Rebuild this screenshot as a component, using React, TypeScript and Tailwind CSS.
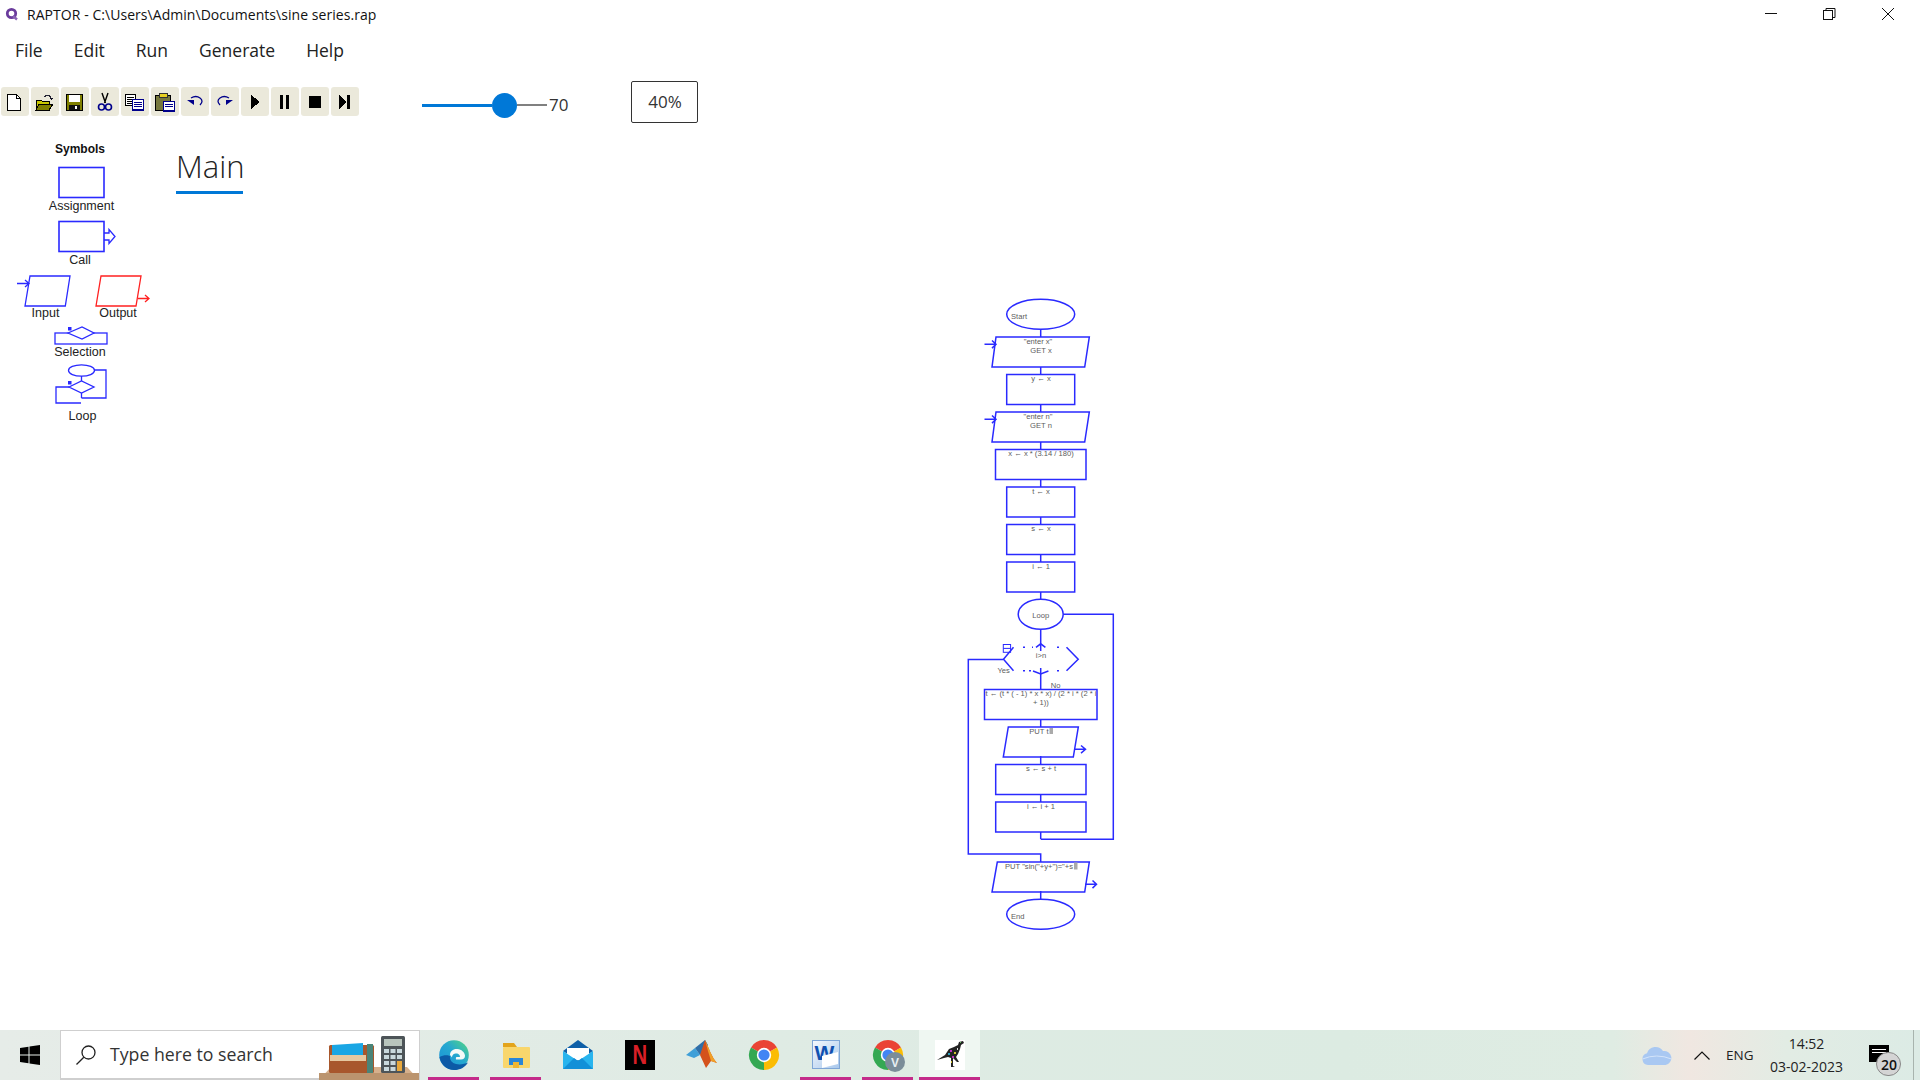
import type { ReactNode } from 'react';

const BLUE = '#2a2aff';
const ui = "font-['Open_Sans','Noto_Sans',sans-serif]";
const arial = "font-['Liberation_Sans',Arial,sans-serif]";

function RaptorLogo() {
  return (
    <svg width="14" height="14" viewBox="0 0 14 14" className="shrink-0">
      <circle cx="6.5" cy="6.5" r="4.2" fill="none" stroke="#6a3b9c" strokeWidth="2.8" />
      <path d="M8 9l4 3.5" stroke="#8a63b4" strokeWidth="2.4" />
    </svg>
  );
}

function WindowControls() {
  return (
    <div className="absolute right-0 top-0 h-[28px] w-[180px]">
      <svg width="180" height="28" viewBox="0 0 180 28" fill="none" stroke="#111" strokeWidth="1">
        <path d="M25 13.5h12" />
        <rect x="83.5" y="10.5" width="9" height="9" />
        <path d="M86 10.5V8.5h9v9h-2" />
        <path d="M142 8l12 12M154 8l-12 12" />
      </svg>
    </div>
  );
}

function TBtn({ children }: { children: ReactNode }) {
  return (
    <div className="flex h-[29px] w-[28px] items-center justify-center rounded-[3px] bg-[#ebe9db]">
      <svg width="20" height="20" viewBox="0 0 20 20" shapeRendering="crispEdges" className="overflow-visible">
        {children}
      </svg>
    </div>
  );
}

function Toolbar() {
  return (
    <div className="flex gap-[2px] pl-px pt-[6px]">
      <TBtn>
        <path d="M2.5 2.500h9l4 4v12h-13z" fill="#fff" stroke="#000" />
        <path d="M11.500 2.500v4h4" fill="none" stroke="#000" />
      </TBtn>
      <TBtn>
        <path d="M1 8h5l1 1h7v9H1z" fill="#c8c800" stroke="#000" />
        <path d="M1 18l3-6h14l-4 6z" fill="#808000" stroke="#000" />
        <path d="M9 5q3-3 6-1l1 3" fill="none" stroke="#223" strokeWidth="1.3" />
        <path d="M14 6h4l-2 2z" fill="#112" />
      </TBtn>
      <TBtn>
        <rect x="1.500" y="2.500" width="16" height="16" fill="#808000" stroke="#000" />
        <rect x="4" y="3" width="11" height="7" fill="#fff" />
        <rect x="4" y="13" width="11" height="5" fill="#111" />
        <rect x="10" y="14" width="2" height="3" fill="#fff" />
      </TBtn>
      <TBtn>
        <path d="M7 1l3.500 10M13 1l-3.500 10" stroke="#000" strokeWidth="1.4" fill="none" shapeRendering="auto" />
        <circle cx="6.500" cy="15" r="3" fill="none" stroke="#00008b" strokeWidth="1.6" shapeRendering="auto" />
        <circle cx="13.500" cy="15" r="3" fill="none" stroke="#00008b" strokeWidth="1.6" shapeRendering="auto" />
      </TBtn>
      <TBtn>
        <rect x="0.500" y="2.500" width="10" height="11" fill="#fff" stroke="#000" />
        <path d="M2 5h7M2 7h7M2 9h7M2 11h7" stroke="#000" />
        <rect x="7.500" y="7.500" width="11" height="11" fill="#fff" stroke="#00008b" />
        <path d="M9 10h8M9 12h8M9 14h8M7 17h12" stroke="#00008b" />
      </TBtn>
      <TBtn>
        <rect x="0.500" y="3.500" width="15" height="15" fill="#77783c" stroke="#000" />
        <rect x="4" y="1" width="8" height="4" fill="#e8d020" stroke="#333" />
        <rect x="8.500" y="9.500" width="11" height="10" fill="#fff" stroke="#00008b" />
        <path d="M10 12h8M10 14h8M8 18h12" stroke="#00008b" />
      </TBtn>
      <TBtn>
        <path d="M6 6q5-3 9 0t0 7" fill="none" stroke="#00008b" strokeWidth="1.3" shapeRendering="auto" />
        <path d="M2 8h7v5z" fill="#00008b" shapeRendering="auto" />
      </TBtn>
      <TBtn>
        <path d="M14 6q-5-3-9 0t0 7" fill="none" stroke="#00008b" strokeWidth="1.3" shapeRendering="auto" />
        <path d="M18 8h-7v5z" fill="#00008b" shapeRendering="auto" />
      </TBtn>
      <TBtn>
        <path d="M6 3l9 7-9 7z" fill="#000" />
      </TBtn>
      <TBtn>
        <rect x="5" y="3" width="3" height="14" fill="#000" />
        <rect x="11" y="3" width="3" height="14" fill="#000" />
      </TBtn>
      <TBtn>
        <rect x="4" y="4" width="12" height="12" fill="#000" />
      </TBtn>
      <TBtn>
        <path d="M4 3l7 7-7 7z" fill="#000" />
        <rect x="12" y="3" width="3" height="14" fill="#000" />
      </TBtn>
    </div>
  );
}

function Slider() {
  return (
    <div className="ml-[63px] mt-[1px] flex h-[42px] items-center self-start pt-[4px]">
      <div className="h-[3px] w-[70px] bg-[#0078d7]" />
      <div className="h-[25px] w-[25px] rounded-full bg-[#0078d7]" />
      <div className="h-[2px] w-[30px] bg-[#808080]" />
      <span className="ml-[2px] text-[17px] text-[#333]">70</span>
    </div>
  );
}

function Label({ children, className }: { children: ReactNode; className: string }) {
  return <div className={`text-center text-[12.5px] leading-[14px] text-[#222] ${arial} ${className}`}>{children}</div>;
}

function Symbols() {
  return (
    <aside className={`w-[176px] shrink-0 pt-[7px] ${arial}`}>
      <div className="w-[160px] text-center text-[12px] font-bold leading-[16px] text-[#111]">Symbols</div>
      <svg width="48" height="33" viewBox="0 0 48 33" fill="none" stroke={BLUE} strokeWidth="1.6" className="ml-[57px] mt-[9px] block">
        <rect x="2" y="1.5" width="45" height="30" />
      </svg>
      <Label className="w-[163px]">Assignment</Label>
      <svg width="60" height="33" viewBox="0 0 60 33" fill="none" stroke={BLUE} strokeWidth="1.6" className="ml-[57px] mt-[7px] block">
        <rect x="2" y="1.5" width="45" height="30" />
        <path d="M47 13h5V9.500l6 7-6 7V20h-5" strokeWidth="1.3" />
      </svg>
      <Label className="w-[160px]">Call</Label>
      <svg width="140" height="33" viewBox="0 0 140 33" fill="none" stroke={BLUE} strokeWidth="1.3" className="ml-[14px] mt-[8px] block">
        <path d="M16 1h40l-4.700 30H11z" />
        <path d="M3 8.500h12M11 5l4 3.500-4 3.500" />
        <g stroke="#ff2020">
          <path d="M87 1h40l-5 30H82z" />
          <path d="M124 23.500h11M131 20l4 3.500-4 3.500" />
        </g>
      </svg>
      <div className="-mt-[2px] flex">
        <Label className="w-[91px]">Input</Label>
        <Label className="w-[54px]">Output</Label>
      </div>
      <svg width="56" height="19" viewBox="0 0 56 19" fill="none" stroke={BLUE} strokeWidth="1.3" className="ml-[54px] mt-[6px] block">
        <rect x="1" y="7" width="52" height="11" />
        <path d="M14 7l14-6 12 6-12 6z" fill="#fff" />
        <rect x="14" y="1" width="3.500" height="3.500" fill={BLUE} stroke="none" />
      </svg>
      <Label className="w-[160px]">Selection</Label>
      <svg width="56" height="42" viewBox="0 0 56 42" fill="none" stroke={BLUE} strokeWidth="1.3" className="ml-[54px] mt-[5px] block">
        <ellipse cx="27.500" cy="6.500" rx="13" ry="5.700" />
        <path d="M27.500 12v5M27.500 29v5" />
        <path d="M15 23l12.500-6L40 23l-12.500 6z" />
        <path d="M40.500 6H52v28H27.500" />
        <path d="M15 23H2v16h25" />
        <rect x="14" y="17" width="3.500" height="3.500" fill={BLUE} stroke="none" />
      </svg>
      <Label className="mt-[3px] w-[165px]">Loop</Label>
    </aside>
  );
}

function T({ x, y, children, anchor = 'middle' }: { x: number; y: number; children: ReactNode; anchor?: 'middle' | 'start' }) {
  return (
    <text x={x} y={y + 2.6} textAnchor={anchor} fontSize="7.6" fill="#5c5c5c" stroke="none" fontFamily="'Liberation Sans',Arial,sans-serif">
      {children}
    </text>
  );
}

function Flowchart() {
  return (
    <svg width="160" height="650" viewBox="960 290 160 650" fill="none" stroke={BLUE} strokeWidth="1.5" className="ml-[784px] mt-[96px] block">
      {/* connectors */}
      <path d="M1040.700 329v8M1040.700 367v8M1040.700 404v8M1040.700 442v8M1040.700 479v8M1040.700 517v8M1040.700 554v8M1040.700 592v8M1040.700 629v22M1040.700 668v21M1040.700 719v8M1040.700 756v8M1040.700 794v8M1040.700 832v7M1040.700 891v8" />
      <ellipse cx="1040.700" cy="314.300" rx="34" ry="15" />
      <path d="M996 337h93.300l-4.600 30H992z" />
      <path d="M984.500 344.300h11M992 340.500l4 3.800-4 3.800" />
      <rect x="1006.700" y="374.500" width="68" height="30" />
      <path d="M996 412h93.300l-4.600 30H992z" />
      <path d="M984.500 419.300h11M992 415.500l4 3.800-4 3.800" />
      <rect x="995.500" y="449.500" width="90.500" height="30" />
      <rect x="1006.700" y="487" width="68" height="30" />
      <rect x="1006.700" y="524.500" width="68" height="30" />
      <rect x="1006.700" y="562" width="68" height="30" />
      <ellipse cx="1040.700" cy="614.300" rx="22.500" ry="15" />
      <path d="M1063.300 614.300h50v225h-72.600" />
      {/* decision, partly painted over in the original */}
      <path d="M1013.500 647.300l-10 12 10 11.500M1066.500 647.300l11.700 12-11.700 11.500" />
      <path d="M1036 647.300l4.700-3.500 4.700 3.500M1033 671l7.700 3 7.700-3" />
      <path d="M1023 647.300h2M1032 647.300h1M1057 647.300h2M1023 670.800h2M1029 670.800h2M1057 670.800h2" />
      <rect x="1003.300" y="644.500" width="7.300" height="7.800" strokeWidth="1" />
      <path d="M1003.300 648.400h7.300" strokeWidth="1" />
      <path d="M1003.300 659.500h-35v194.500h72.400v8" />
      <rect x="984.500" y="689.500" width="112.500" height="30" />
      <path d="M1008.300 727h70l-5 30h-70z" />
      <path d="M1074 749.300h11.500M1081 745.500l4.500 3.800-4.500 3.800" />
      <rect x="995.700" y="764.500" width="90.300" height="30" />
      <rect x="995.700" y="802" width="90.300" height="30" />
      <path d="M997.300 862h92l-4.600 30H992z" />
      <path d="M1085 884.300h11.500M1092.500 880.500l4 3.800-4 3.800" />
      <ellipse cx="1040.700" cy="914.300" rx="34" ry="15" />

      <T x={1011} y={316} anchor="start">Start</T>
      <T x={1038} y={341}>"enter x"</T>
      <T x={1041} y={350}>GET x</T>
      <T x={1041} y={378.700}>y ← x</T>
      <T x={1038} y={416}>"enter n"</T>
      <T x={1041} y={425.300}>GET n</T>
      <T x={1041} y={453.300}>x ← x * (3.14 / 180)</T>
      <T x={1041} y={491.700}>t ← x</T>
      <T x={1041} y={528.700}>s ← x</T>
      <T x={1041} y={566}>i ← 1</T>
      <T x={1040.700} y={615}>Loop</T>
      <T x={1041} y={655}>i&gt;n</T>
      <T x={1003.700} y={670}>Yes</T>
      <T x={1055.700} y={685}>No</T>
      <T x={1041} y={693.300}>t ← (t * ( - 1) * x * x) / (2 * i * (2 * i</T>
      <T x={1041} y={702.300}>+ 1))</T>
      <T x={1029.300} y={731} anchor="start">PUT t</T>
      <rect x="1049.500" y="728" width="3.500" height="6" fill="#aaa" stroke="none" />
      <T x={1041} y={806}>i ← i + 1</T>
      <T x={1041} y={768.700}>s ← s + t</T>
      <T x={1005} y={866} anchor="start">PUT "sin("+y+")="+s</T>
      <rect x="1074" y="862.500" width="3.500" height="7" fill="#aaa" stroke="none" />
      <T x={1011} y={916} anchor="start">End</T>
    </svg>
  );
}

function TaskIcon({ open = false, children }: { open?: boolean; children: ReactNode }) {
  return (
    <div className={`flex h-[50px] w-[51px] shrink-0 justify-center border-b-[3px] pt-[10px] ${open ? 'border-[#c42b8a]' : 'border-transparent'}`}>
      {children}
    </div>
  );
}

function Chrome({ badge = false }: { badge?: boolean }) {
  return (
    <svg width="30" height="30" viewBox="0 0 30 30" className="overflow-visible">
      <path d="M15 15L2 7.500A15 15 0 0 1 28 7.500z" fill="#ea4335" />
      <path d="M15 15L28 7.500A15 15 0 0 1 15 30z" fill="#fbbc04" />
      <path d="M15 15L15 30A15 15 0 0 1 2 7.500z" fill="#34a853" />
      <circle cx="15" cy="15" r="7.200" fill="#fff" />
      <circle cx="15" cy="15" r="5.600" fill="#4285f4" />
      {badge && (
        <>
          <circle cx="22" cy="22" r="10" fill="#7b8d99" />
          <text x="22" y="26.500" textAnchor="middle" fontSize="12" fontWeight="700" fill="#e8eef2" fontFamily="'Liberation Sans',sans-serif">V</text>
        </>
      )}
    </svg>
  );
}

function Taskbar() {
  return (
    <footer className="relative flex h-[50px] shrink-0 bg-[linear-gradient(90deg,#e6ece8_0%,#dfebe4_40%,#dcebe2_70%,#dfece3_84%,#f0e7e1_88%,#e2ece4_93%,#dcebe5_100%)]">
      <div className="flex w-[60px] shrink-0 items-center justify-center">
        <svg width="20" height="20" viewBox="0 0 20 20" fill="#000">
          <path d="M0 3l8.500-1.200v7.700H0zM9.500 1.600L20 0v9.500H9.500zM0 10.500h8.500v7.700L0 17zM9.500 10.500H20V20L9.500 18.400z" />
        </svg>
      </div>
      <div className="relative flex w-[360px] shrink-0 items-center border border-b-2 border-[#cfcfcf] bg-white pl-[14px]">
        <svg width="22" height="20" viewBox="0 0 22 20" fill="none" stroke="#222" strokeWidth="1.300">
          <circle cx="13.500" cy="7.500" r="6.500" />
          <path d="M8.800 12.200L1.500 19.500" />
        </svg>
        <span className={`ml-[13px] text-[17.7px] text-[#333] ${ui}`}>Type here to search</span>
        <svg width="100" height="50" viewBox="0 0 100 50" className="absolute right-0 top-[-1px]">
          <path d="M0 50l12-13h76l12 13z" fill="#d6b08c" />
          <rect x="0" y="43" width="100" height="7" fill="#bb946e" />
          <rect x="10" y="15" width="45" height="28" rx="1.500" fill="#a8572c" />
          <path d="M13 15L44 13v12H13z" fill="#1aa6e4" />
          <rect x="11" y="25" width="36" height="6" fill="#e6c8a0" />
          <rect x="48" y="14" width="6" height="29" fill="#4a8478" />
          <rect x="62" y="6" width="24" height="37" rx="1.500" fill="#4d5458" />
          <rect x="65" y="9" width="18" height="7" fill="#b8c4bc" />
          <g fill="#c9d8dc">
            <rect x="65" y="19" width="5" height="4" />
            <rect x="71.500" y="19" width="5" height="4" />
            <rect x="78" y="19" width="5" height="4" />
            <rect x="65" y="25" width="5" height="4" />
            <rect x="71.500" y="25" width="5" height="4" />
            <rect x="78" y="25" width="5" height="4" />
            <rect x="65" y="31" width="5" height="4" />
            <rect x="71.500" y="31" width="5" height="4" />
            <rect x="65" y="37" width="5" height="4" />
            <rect x="71.500" y="37" width="5" height="4" />
          </g>
          <rect x="78" y="31" width="5" height="10" fill="#e8a83c" />
        </svg>
      </div>
      <div className="ml-[8px] flex gap-[11px]">
        <TaskIcon open>
          <svg width="30" height="30" viewBox="0 0 30 30">
            <defs>
              <linearGradient id="edgeTop" x1="0" y1="1" x2="1" y2="0">
                <stop offset="0" stopColor="#1a8fd8" />
                <stop offset="0.55" stopColor="#25a8d0" />
                <stop offset="1" stopColor="#56d97e" />
              </linearGradient>
            </defs>
            <circle cx="15" cy="15" r="14.800" fill="url(#edgeTop)" />
            <path d="M0.500 17c1 7 7 13 14.500 13 6 0 11-2.500 14-7.500-3 1.500-8 2.500-12 1.500-4-1-6.500-4-6-8-2-1-7-1-10.500 1z" fill="#0c5aa6" />
            <path d="M11 15c0-4 3.500-6.500 7.500-6 4 .5 7 3 7.500 6.500.2 2.500-1.500 4-4 4H17c0 0-.5-2 .5-2.500h3c.8 0 .8-1-.3-2.300-1-1.200-3-1.500-4.700-.9-1.600.6-2.500 2.200-2.500 3.700z" fill="#f4faf8" />
          </svg>
        </TaskIcon>
        <TaskIcon open>
          <svg width="28" height="30" viewBox="0 0 28 30">
            <path d="M1 3h11l3 4H1z" fill="#e3a41c" />
            <rect x="1" y="7" width="27" height="21" rx="1" fill="#f9d66c" />
            <path d="M7 25v-7h14v7h-4v-3h-6v3z" fill="#2a86d8" />
            <rect x="11" y="22" width="6" height="6" fill="#f2b632" />
          </svg>
        </TaskIcon>
        <TaskIcon>
          <svg width="30" height="30" viewBox="0 0 30 30">
            <path d="M0 11L15 0l15 11-15 10z" fill="#0e5fa8" />
            <rect x="4" y="8" width="22" height="12" fill="#fff" />
            <path d="M0 11l15 10 15-10v18H0z" fill="#28b4ee" />
            <path d="M0 29l11-11 4 3 4-3 11 11z" fill="#1290d8" />
          </svg>
        </TaskIcon>
        <TaskIcon>
          <div className={`relative flex h-[30px] w-[30px] items-center justify-center overflow-hidden bg-black text-[27px] font-bold leading-[30px] text-[#d81f26] ${arial}`}>
            <span className="scale-x-[0.75]">N</span>
          </div>
        </TaskIcon>
        <TaskIcon>
          <svg width="32" height="30" viewBox="0 0 32 30">
            <path d="M0 15l9-7 5 7-6 3z" fill="#3f9fd8" />
            <path d="M9 8l10-8 3 5-8 10z" fill="#2f6fa8" />
            <path d="M19 0c3 6 7 18 12 23l-6-2-5 7-6-13z" fill="#d4521c" />
            <path d="M19 0c3 6 7 18 12 23l-6-2-3-10z" fill="#f0a028" />
          </svg>
        </TaskIcon>
        <TaskIcon>
          <Chrome />
        </TaskIcon>
        <TaskIcon open>
          <div className="relative h-[29px] w-[28px] border border-[#7fa6d6] bg-[linear-gradient(135deg,#f4f8fd,#a9c8ec)]">
            <span className={`absolute left-[2px] top-[0px] text-[21px] font-bold leading-[24px] text-[#1050b0] ${arial}`}>W</span>
            <div className="absolute bottom-[2px] right-[1px] h-[12px] w-[16px] skew-y-[-14deg] bg-white" />
          </div>
        </TaskIcon>
        <TaskIcon open>
          <Chrome badge />
        </TaskIcon>
      </div>
      <div className="ml-[6px] flex h-[50px] w-[61px] shrink-0 justify-center border-b-[3px] border-[#c42b8a] bg-[#eff7f2] pt-[10px]">
        <svg width="30" height="30" viewBox="0 0 30 30" className="bg-white">
          <path d="M2 20L10 15l4-6 5-2 4-2 1-3 4-1 1 2-3 2-1 4-2 5-2 3 3 5h-2l-4-4v8l2 1h-4v-9l-3-1-4 1z" fill="#222" />
          <g>
            <rect x="15" y="10" width="2" height="2" fill="#c030c0" />
            <rect x="19" y="12" width="2" height="2" fill="#d0c030" />
            <rect x="13" y="13" width="2" height="2" fill="#30a0c0" />
            <rect x="17" y="16" width="2" height="2" fill="#c030c0" />
            <rect x="22" y="8" width="1" height="2" fill="#e0e0e0" />
            <rect x="16" y="21" width="1" height="2" fill="#d0c030" />
            <rect x="25" y="2" width="1" height="1" fill="#60c060" />
          </g>
        </svg>
      </div>
      <div className={`absolute inset-y-0 right-0 flex w-[278px] items-center text-[#222] ${ui}`}>
        <svg width="30" height="19" viewBox="0 0 30 19" className="shrink-0">
          <path d="M6 19a6 6 0 0 1-1-11.800A9 9 0 0 1 21 5a7 7 0 0 1 2.500 14z" fill="#a9c8f2" />
          <path d="M0.500 13q14-6 29 0" fill="none" stroke="#d4e4fa" strokeWidth="1" />
        </svg>
        <svg width="16" height="9" viewBox="0 0 16 9" fill="none" stroke="#111" strokeWidth="1.200" className="ml-[22px] shrink-0">
          <path d="M0.500 8.500L8 1l7.500 7.500" />
        </svg>
        <span className="ml-[16px] text-[13.5px]">ENG</span>
        <div className="ml-[15px] flex w-[76px] flex-col items-center text-[14px] leading-[23px]">
          <span>14:52</span>
          <span className="whitespace-nowrap">03-02-2023</span>
        </div>
        <div className="relative ml-[25px] mt-[15px] h-[17px] w-[20px] self-start bg-black">
          <div className="ml-[3px] mt-[4px] h-[1px] w-[14px] bg-white" />
          <div className="ml-[3px] mt-[2px] h-[1px] w-[14px] bg-white" />
          <div className="absolute left-[7px] top-[7px] flex h-[24px] w-[25px] items-center justify-center rounded-full border border-[#888] bg-[#d4d4d4] text-[14px] font-semibold text-[#111]">
            20
          </div>
        </div>
        <div className="absolute right-[6px] top-0 h-full w-px bg-[#a8b4ae]" />
      </div>
    </footer>
  );
}

export default function App() {
  return (
    <div className={`relative flex h-screen w-full flex-col overflow-hidden bg-white ${ui}`}>
      <header className="flex h-[28px] shrink-0 items-center pl-[5px] text-[14px] text-[#111]">
        <RaptorLogo />
        <span className="ml-[8px] whitespace-nowrap tracking-[0.05px]">RAPTOR - C:\Users\Admin\Documents\sine series.rap</span>
      </header>
      <WindowControls />
      <nav className="flex h-[44px] shrink-0 items-center gap-[31px] pl-[15px] text-[17.5px] text-[#222]">
        <span>File</span>
        <span>Edit</span>
        <span>Run</span>
        <span>Generate</span>
        <span>Help</span>
      </nav>
      <div className="mt-[9px] flex h-[42px] shrink-0">
        <Toolbar />
        <Slider />
        <div className="ml-[63px] flex h-[42px] w-[67px] items-center justify-center rounded-[2px] border border-[#333] text-[17px] text-[#333]">
          40%
        </div>
      </div>
      <main className="mt-[11px] flex min-h-0 flex-1">
        <Symbols />
        <section>
          <div className="mt-[13px] w-[67px] border-b-[3px] border-[#0078d7] pb-[6px]">
            <span className="block text-[31px] font-light leading-[38px] text-[#222]">Main</span>
          </div>
          <Flowchart />
        </section>
      </main>
      <Taskbar />
    </div>
  );
}
